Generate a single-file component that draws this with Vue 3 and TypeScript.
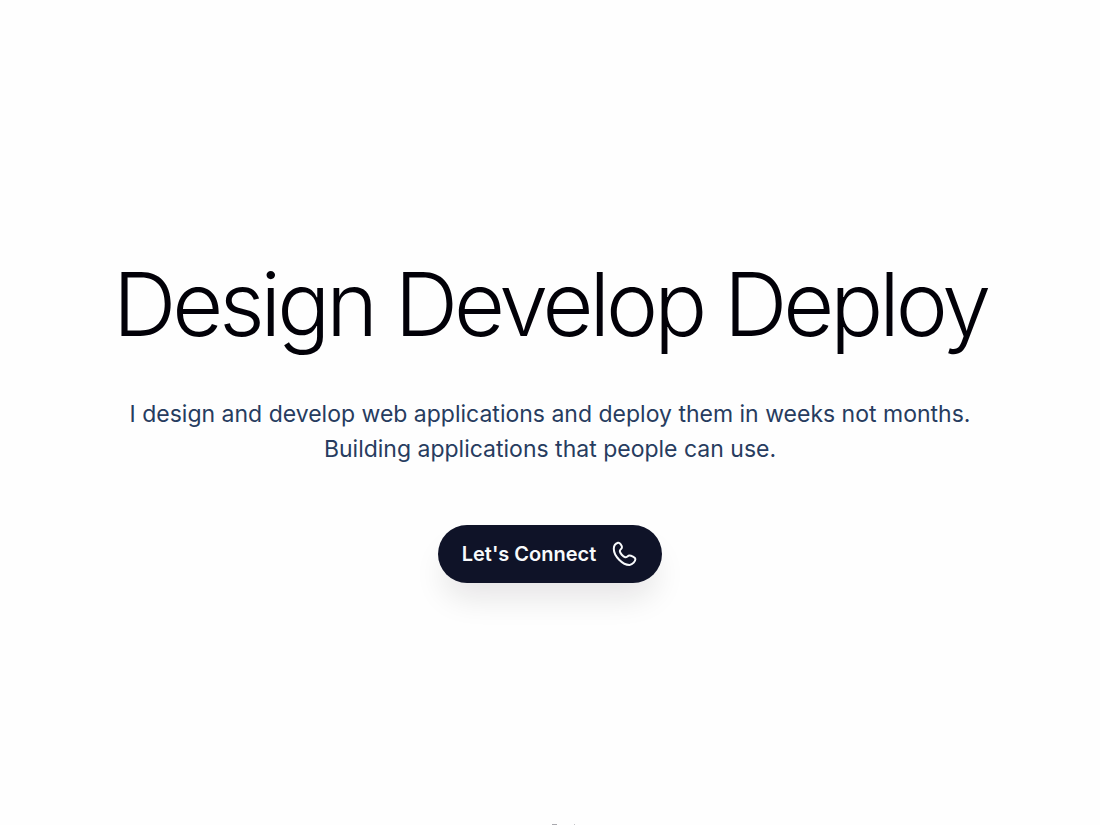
<script setup lang="ts">
const title: string = 'Design Develop Deploy'
</script>

<template>
  <main class="page">
    <section class="hero">
      <h1 class="title">{{ title }}</h1>
      <p class="lead">I design and develop web applications and deploy them in weeks not months. Building applications that people can use.</p>
      <a class="cta" href="#contact">
        <span>Let's Connect</span>
        <svg class="phone" viewBox="0 0 26 26" aria-hidden="true">
          <path d="M6 1.8C7.7 1.3 10.3 4.9 9.9 6.6C9.7 7.8 7.7 8.8 7.8 10.2C8 12.2 11 15.7 13.2 16.3C14.7 16.7 15.8 14.6 17.2 14.5C19 14.4 23.4 16.3 23.4 18.1C23.4 20.1 20.8 23.8 17.6 23.9C10.8 24.1 1.8 15.2 1.8 7.7C1.8 4.6 3.6 2.5 6 1.8Z" />
        </svg>
      </a>
    </section>
    <svg class="peek" viewBox="0 0 26 1" aria-hidden="true">
      <path d="M1 .5h5" stroke="#a9a9ae" />
      <path d="M23 .5h1" stroke="#c4c4c8" />
    </svg>
  </main>
</template>

<style>
body { background: #fefefe; }
</style>
<style scoped>
.page {
  min-height: 100vh;
  box-sizing: border-box;
  padding: 250px 24px 0;
  display: flex;
  flex-direction: column;
  align-items: center;
  font-family: Inter, "Liberation Sans", sans-serif;
}
.hero {
  display: flex;
  flex-direction: column;
  align-items: center;
  text-align: center;
}
.title {
  margin: 0;
  font-size: 88px;
  line-height: 108px;
  font-weight: 300;
  letter-spacing: -4px;
  color: #020108;
}
.lead {
  margin: 39px 0 0;
  max-width: 880px;
  font-size: 23px;
  line-height: 35px;
  color: #273c5f;
}
.cta {
  margin-top: 58px;
  height: 58px;
  padding: 0 24px;
  display: flex;
  align-items: center;
  gap: 16px;
  border-radius: 29px;
  background: #0f1328;
  color: #f8fafc;
  font-size: 20px;
  font-weight: 600;
  text-decoration: none;
  box-shadow: 0 20px 32px -6px rgba(20, 10, 20, 0.11);
}
.phone {
  width: 26px;
  height: 26px;
  fill: none;
  stroke: currentColor;
  stroke-width: 2;
  stroke-linejoin: round;
}
.peek {
  width: 26px;
  height: 1px;
  margin: auto 0 0 28px;
}
</style>
